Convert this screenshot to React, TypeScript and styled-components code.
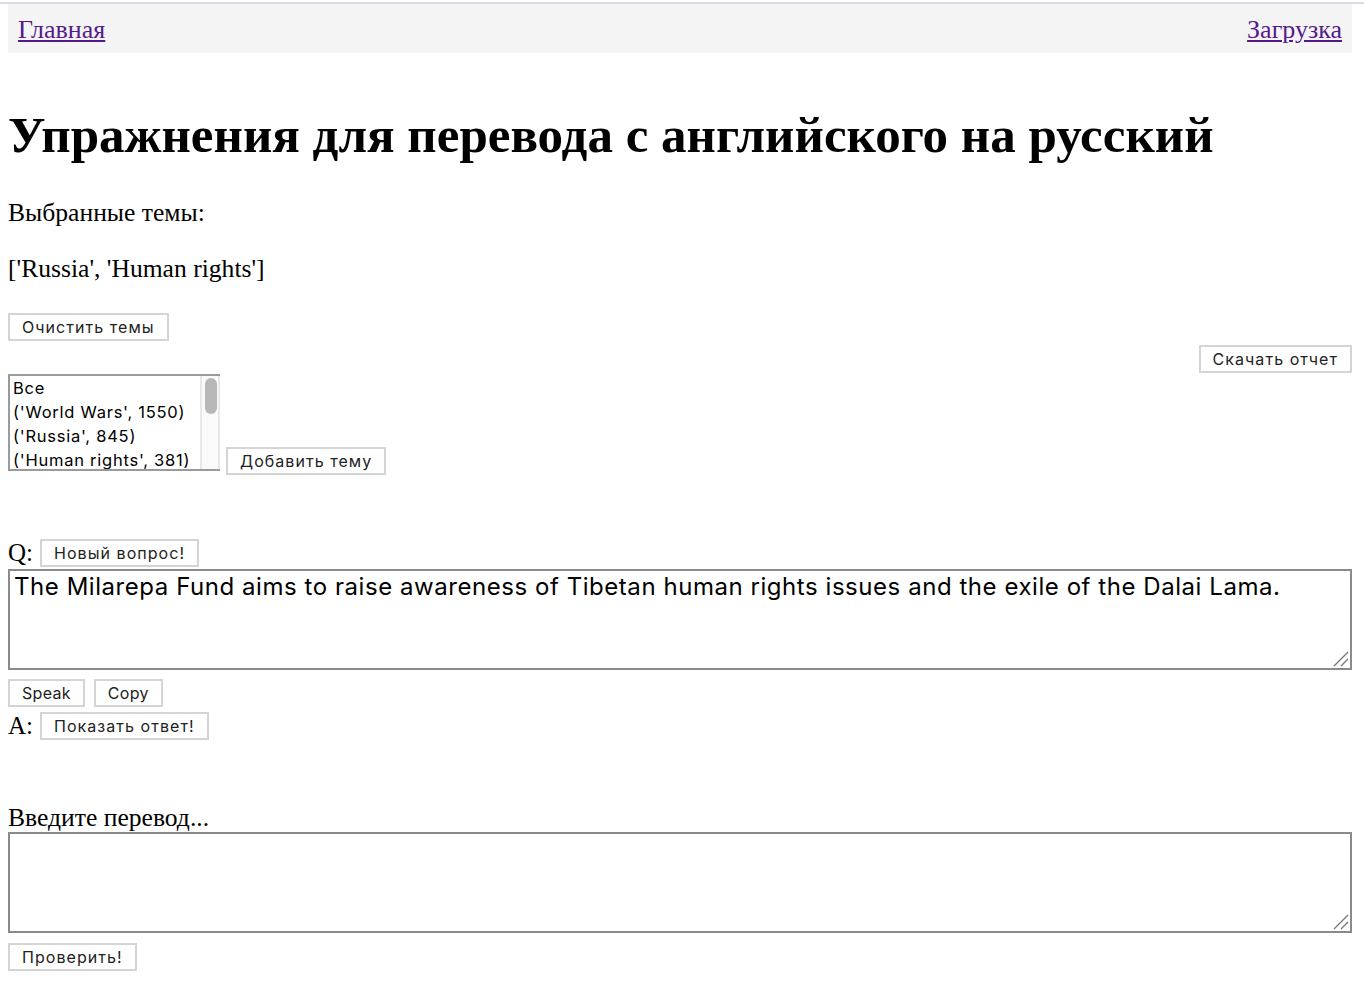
import React from "react";
import styled, { createGlobalStyle } from "styled-components";

const Global = createGlobalStyle`
  html, body { margin: 0; padding: 0; background: #fff; }
  body { font-family: "Liberation Serif", "Times New Roman", serif; color: #000; }
`;

const TopRule = styled.div`
  margin-top: 2px;
  height: 2px;
  background: #dcdae2;
`;

const Page = styled.div`
  padding: 0 12px 20px 8px;
`;

const Nav = styled.nav`
  display: flex;
  justify-content: space-between;
  align-items: center;
  height: 49px;
  padding: 2px 10px 0;
  box-sizing: border-box;
  background: #f4f4f4;
`;

const NavLink = styled.a`
  font-size: 26px;
  color: #551a8b;
  text-decoration: underline;
  font-family: "Liberation Serif", serif;
`;

const Title = styled.h1`
  margin: 54px 0 0;
  font-size: 51px;
  line-height: 56px;
  font-weight: bold;
  font-family: "Liberation Serif", serif;
`;

const Para = styled.p<{ $mt: number }>`
  margin: ${(p) => p.$mt}px 0 0;
  font-size: 25.6px;
  line-height: 28px;
`;

const Btn = styled.button<{ $latin?: boolean }>`
  font-family: Inter, "Liberation Sans", Arial, sans-serif;
  font-size: 16px;
  letter-spacing: ${(p) => (p.$latin ? "0.3px" : "1.05px")};
  height: 28px;
  padding: 0 12px;
  background: #fff;
  color: #222;
  border: 2px solid #d4d4d4;
  border-radius: 0;
  cursor: pointer;
`;

const ClearRow = styled.div`
  margin-top: 30px;
  display: flex;
`;

const ReportRow = styled.div`
  display: flex;
  justify-content: flex-end;
  margin-top: 4px;
`;

const SelectRow = styled.div`
  display: flex;
  align-items: flex-end;
  gap: 6px;
  margin-top: 1px;
`;

const ListBox = styled.div`
  width: 212px;
  height: 97px;
  box-sizing: border-box;
  border: 2px solid #9a9a9a;
  border-right: none;
  display: flex;
  overflow: hidden;
  font-family: Inter, "Liberation Sans", Arial, sans-serif;
  font-size: 16.5px;
  letter-spacing: 0.75px;
  line-height: 24px;
`;

const Options = styled.div`
  flex: 1;
  padding: 0 0 0 3px;
  white-space: nowrap;
  overflow: hidden;
`;

const Track = styled.div`
  width: 20px;
  flex: none;
  background: #fafafa;
  border-left: 2px solid #e8e8e8;
  border-right: 2px solid #e8e8e8;
  box-sizing: border-box;
  padding: 2px 3px;
`;

const Thumb = styled.div`
  width: 12px;
  height: 36px;
  border-radius: 6px;
  background: #b8b8b8;
`;

const AddBtn = styled(Btn)`
  margin-bottom: -4px;
`;

const LabelRow = styled.div<{ $mt: number }>`
  display: flex;
  align-items: flex-end;
  gap: 7px;
  margin-top: ${(p) => p.$mt}px;
  font-size: 24px;
  line-height: 24px;
`;

const Label = styled.span`
  font-size: 25px;
  line-height: 20px;
  padding-bottom: 4px;
`;

const AreaWrap = styled.div<{ $mt: number }>`
  position: relative;
  margin-top: ${(p) => p.$mt}px;
`;

const Area = styled.textarea`
  display: block;
  width: 100%;
  box-sizing: border-box;
  height: 101px;
  margin: 0;
  border: 2px solid #8a8a8a;
  border-radius: 0;
  padding: 1px 4px;
  font-family: Inter, "Liberation Sans", Arial, sans-serif;
  font-size: 24px;
  letter-spacing: 0.55px;
  line-height: 30px;
  color: #000;
  resize: none;
  outline: none;
`;

const Grip = styled.svg`
  position: absolute;
  right: 3px;
  bottom: 3px;
  width: 16px;
  height: 16px;
  pointer-events: none;
`;

const BtnRow = styled.div<{ $mt: number }>`
  display: flex;
  gap: 9px;
  margin-top: ${(p) => p.$mt}px;
`;

const Prompt = styled.div`
  margin-top: 64px;
  font-size: 25.6px;
  line-height: 28px;
`;

function TextBox({ mt, value }: { mt: number; value: string }) {
  return (
    <AreaWrap $mt={mt}>
      <Area defaultValue={value} />
      <Grip viewBox="0 0 16 16">
        <path d="M1 15 L15 1 M8 15 L15 8" stroke="#777" strokeWidth="1.3" fill="none" />
      </Grip>
    </AreaWrap>
  );
}

export default function App() {
  return (
    <>
      <Global />
      <TopRule />
      <Page>
        <Nav>
          <NavLink href="#">Главная</NavLink>
          <NavLink href="#">Загрузка</NavLink>
        </Nav>
        <Title>Упражнения для перевода с английского на русский</Title>
        <Para $mt={36}>Выбранные темы:</Para>
        <Para $mt={28}>['Russia', 'Human rights']</Para>
        <ClearRow>
          <Btn>Очистить темы</Btn>
        </ClearRow>
        <ReportRow>
          <Btn>Скачать отчет</Btn>
        </ReportRow>
        <SelectRow>
          <ListBox>
            <Options>
              <div>Все</div>
              <div>('World Wars', 1550)</div>
              <div>('Russia', 845)</div>
              <div>('Human rights', 381)</div>
            </Options>
            <Track>
              <Thumb />
            </Track>
          </ListBox>
          <AddBtn>Добавить тему</AddBtn>
        </SelectRow>
        <LabelRow $mt={68}>
          <Label>Q:</Label>
          <Btn>Новый вопрос!</Btn>
        </LabelRow>
        <TextBox
          mt={2}
          value="The Milarepa Fund aims to raise awareness of Tibetan human rights issues and the exile of the Dalai Lama."
        />
        <BtnRow $mt={9}>
          <Btn $latin>Speak</Btn>
          <Btn $latin>Copy</Btn>
        </BtnRow>
        <LabelRow $mt={5}>
          <Label>A:</Label>
          <Btn>Показать ответ!</Btn>
        </LabelRow>
        <Prompt>Введите перевод...</Prompt>
        <TextBox mt={0} value="" />
        <BtnRow $mt={10}>
          <Btn>Проверить!</Btn>
        </BtnRow>
      </Page>
    </>
  );
}
